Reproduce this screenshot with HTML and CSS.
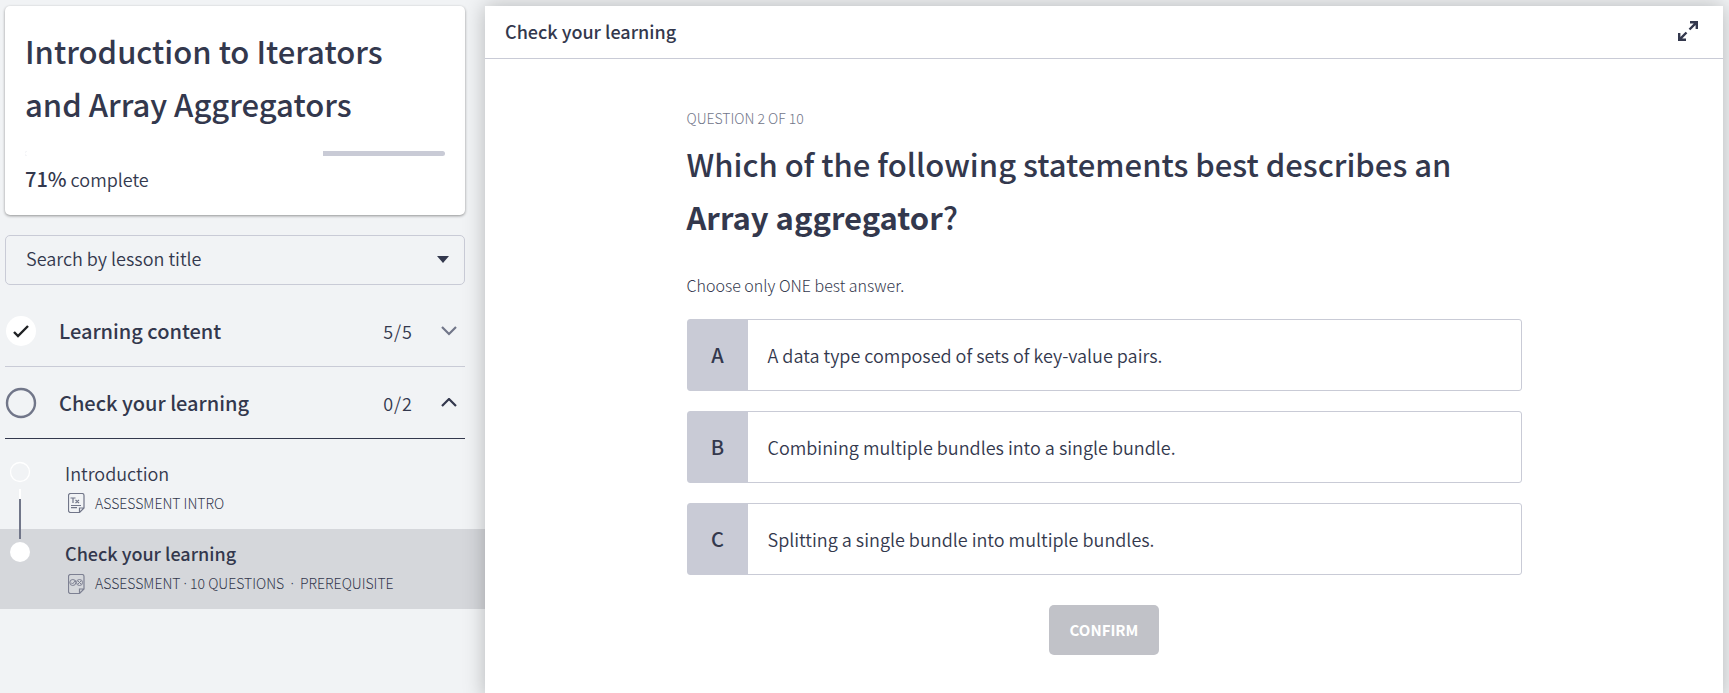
FILE: index.html
```html
<!DOCTYPE html>
<html lang="en">
<head>
<meta charset="utf-8">
<meta name="viewport" content="width=device-width, initial-scale=1">
<title>Introduction to Iterators and Array Aggregators</title>
<link rel="stylesheet" href="styles.css">
</head>
<body>
<div class="layout">
  <aside class="sidebar">
    <section class="course-card">
      <h1 class="course-title">Introduction to Iterators and Array Aggregators</h1>
      <div class="progress" role="progressbar" aria-label="Course progress" aria-valuenow="71" aria-valuemin="0" aria-valuemax="100">
        <div class="progress-fill" style="width: 71%"></div>
      </div>
      <p class="progress-text"><strong>71%</strong> complete</p>
    </section>

    <div class="search">
      <select class="search-select" aria-label="Search by lesson title">
        <option>Search by lesson title</option>
      </select>
      <svg class="search-arrow" width="12" height="7" viewBox="0 0 12 7" aria-hidden="true"><path d="M0 0h12L6 7z" fill="#33384d"/></svg>
    </div>

    <nav class="sections" aria-label="Lessons">
      <button type="button" class="section" aria-expanded="false">
        <svg class="status" width="32" height="32" viewBox="0 0 32 32" aria-hidden="true"><circle cx="16" cy="16" r="15" fill="#fff"/><path d="M9 17l4 4 10-10" fill="none" stroke="#1f2124" stroke-width="2.400"/></svg>
        <span class="section-name">Learning content</span>
        <span class="section-count">5/5</span>
        <svg class="chevron" width="16" height="10" viewBox="0 0 16 10" aria-hidden="true"><path d="M1 1l7 7 7-7" fill="none" stroke="#717689" stroke-width="2.200"/></svg>
      </button>
      <button type="button" class="section section-open" aria-expanded="true">
        <svg class="status" width="32" height="32" viewBox="0 0 32 32" aria-hidden="true"><circle cx="16" cy="16" r="14" fill="none" stroke="#717689" stroke-width="2.400"/></svg>
        <span class="section-name">Check your learning</span>
        <span class="section-count">0/2</span>
        <svg class="chevron" width="16" height="10" viewBox="0 0 16 10" aria-hidden="true"><path d="M1 8l7-7 7 7" fill="none" stroke="#33384d" stroke-width="2.200"/></svg>
      </button>
    </nav>

    <div class="lessons">
      <a class="lesson" href="#introduction">
        <svg class="marker" width="22" height="80" viewBox="0 0 22 80" aria-hidden="true"><circle cx="11" cy="23" r="9.500" fill="none" stroke="#fff" stroke-width="1.300"/><path d="M11 40v10" stroke="#fff" stroke-width="2"/><path d="M11 50v30" stroke="#717689" stroke-width="2"/></svg>
        <span class="lesson-body">
          <span class="lesson-name">Introduction</span>
          <span class="lesson-meta">
            <svg width="17" height="20" viewBox="0 0 17 20" fill="none" stroke="#717689" stroke-width="1.200" aria-hidden="true"><path d="M11.500 19.500H2.500a2 2 0 0 1-2-2v-15a2 2 0 0 1 2-2h11.500a2 2 0 0 1 2 2V15L11.500 19.500V15h4.500"/><path d="M3 12.500h10M3 14.700h6M2.500 5h5M5 5v5M7.500 7l3.500 3M11 7l-3.500 3"/></svg>
            <span>ASSESSMENT INTRO</span>
          </span>
        </span>
      </a>
      <a class="lesson lesson-current" href="#check" aria-current="page">
        <svg class="marker" width="22" height="80" viewBox="0 0 22 80" aria-hidden="true"><path d="M11 0v10" stroke="#717689" stroke-width="2"/><circle cx="11" cy="23" r="10" fill="#fff"/></svg>
        <span class="lesson-body">
          <span class="lesson-name">Check your learning</span>
          <span class="lesson-meta">
            <svg width="17" height="20" viewBox="0 0 17 20" fill="none" stroke="#7d8092" aria-hidden="true"><path stroke-width="1.200" d="M11.500 19.500H2.500a2 2 0 0 1-2-2v-15a2 2 0 0 1 2-2h11.500a2 2 0 0 1 2 2V15L11.500 19.500V15h4.500"/><circle cx="4.800" cy="8.500" r="3"/><circle cx="11.500" cy="8.500" r="3"/><path d="M3 8.500l1.500 1.500L7.500 6.500M10 7l3 3M13 7l-3 3"/></svg>
            <span>ASSESSMENT <span class="dot">·</span> 10 QUESTIONS &nbsp;<span class="dot">·</span>&nbsp; PREREQUISITE</span>
          </span>
        </span>
      </a>
    </div>
  </aside>

  <main class="panel">
    <header class="panel-header">
      <h2 class="panel-title">Check your learning</h2>
      <button type="button" class="expand" aria-label="Full screen">
        <svg width="20" height="20" viewBox="0 0 20 20" fill="none" stroke="#33384d" stroke-width="2.400" aria-hidden="true"><path d="M12 1.200h6.800V8M18.800 1.200l-7.300 7.300M1.200 12v6.800H8M1.200 18.800l7.300-7.300"/></svg>
      </button>
    </header>
    <form class="question">
      <p class="question-count">QUESTION 2 OF 10</p>
      <h3 class="question-title">Which of the following statements best describes an <strong>Array aggregator</strong>?</h3>
      <p class="hint">Choose only ONE best answer.</p>
      <div class="options">
        <button type="button" class="option"><span class="option-key">A</span><span class="option-text">A data type composed of sets of key-value pairs.</span></button>
        <button type="button" class="option"><span class="option-key">B</span><span class="option-text">Combining multiple bundles into a single bundle.</span></button>
        <button type="button" class="option"><span class="option-key">C</span><span class="option-text">Splitting a single bundle into multiple bundles.</span></button>
      </div>
      <button type="submit" class="confirm" disabled>CONFIRM</button>
    </form>
  </main>
</div>
</body>
</html>
```
FILE: styles.css
```css
* {
  box-sizing: border-box;
}

body {
  margin: 0;
  background: #f1f3f5;
  color: #33384d;
  font-family: "Noto Sans CJK SC", "Noto Sans", sans-serif;
  font-size: 18px;
  font-weight: 350;
  line-height: 30px;
}

h1, h2, h3, p {
  margin: 0;
}

button, select {
  font: inherit;
  color: inherit;
}

.layout {
  display: grid;
  grid-template-columns: 485px 1fr;
  min-height: 100vh;
  padding: 6px 6px 0 0;
  overflow: hidden;
}

.course-card {
  margin: 0 20px 20px 5px;
  padding: 18px 20px 21px;
  background: #fff;
  border-radius: 5px;
  box-shadow: 0 1px 3px rgba(0, 0, 0, 0.4);
}

.course-title {
  font-size: 31px;
  font-weight: 500;
  line-height: 53px;
}

.progress {
  height: 5px;
  margin: 21px 0 8px;
  border-radius: 3px;
  background: #c9cbd6;
  overflow: hidden;
}

.progress-fill {
  height: 100%;
  background: #fff;
}

.progress-text strong {
  font-size: 20px;
  font-weight: 500;
}

.search {
  display: grid;
  align-items: center;
  margin: 0 20px 10px 5px;
}

.search-select,
.search-arrow {
  grid-area: 1 / 1;
}

.search-select {
  appearance: none;
  height: 50px;
  padding: 0 20px 4px;
  border: 1px solid #c9cbd6;
  border-radius: 5px;
  background: transparent;
}

.search-arrow {
  justify-self: end;
  margin: 0 16px 2px 0;
  pointer-events: none;
}

.sections {
  margin: 0 20px 0 5px;
}

.section {
  display: flex;
  align-items: center;
  width: 100%;
  height: 72px;
  padding: 0 8px 0 0;
  border: 0;
  border-bottom: 1px solid #c9cbd6;
  background: none;
  text-align: left;
}

.section-open {
  border-bottom-color: #33384d;
}

.section-name {
  flex: 1;
  margin-left: 22px;
  font-size: 20px;
  font-weight: 500;
}

.section-count {
  margin-right: 28px;
  letter-spacing: 1px;
}

.lessons {
  padding-top: 10px;
}

.lesson {
  display: flex;
  height: 80px;
  padding-left: 9px;
  color: inherit;
  text-decoration: none;
}

.lesson-current {
  background: #d5d7db;
}

.lesson-body {
  display: flex;
  flex-direction: column;
  padding: 9px 0 0 34px;
}

.lesson-current .lesson-name {
  font-weight: 500;
}

.lesson-meta {
  display: flex;
  align-items: center;
  gap: 10px;
  padding-left: 3px;
  font-size: 14px;
  font-weight: 300;
}

.dot {
  font-family: "Noto Sans", sans-serif;
}

.panel {
  background: #fff;
  box-shadow: 0 0 20px rgba(0, 0, 0, 0.25);
}

.panel-header {
  display: flex;
  align-items: center;
  justify-content: space-between;
  height: 53px;
  padding: 0 25px 3px 20px;
  border-bottom: 1px solid #c9cbd6;
}

.panel-title {
  font-size: 18px;
  font-weight: 500;
}

.expand {
  display: flex;
  padding: 0;
  border: 0;
  background: none;
}

.question {
  display: flex;
  flex-direction: column;
  max-width: 835px;
  margin: 0 auto;
  padding: 44px 0;
}

.question-count {
  margin-bottom: 4px;
  color: #717689;
  font-size: 14px;
  font-weight: 300;
}

.question-title {
  font-size: 31px;
  font-weight: 500;
  line-height: 53px;
}

.question-title strong {
  font-weight: 700;
}

.hint {
  margin: 27px 0 19px;
  font-size: 16px;
  font-weight: 300;
}

.options {
  display: grid;
  gap: 20px;
}

.option {
  display: flex;
  height: 72px;
  padding: 0;
  border: 1px solid #c9cbd6;
  border-radius: 3px;
  background: #fff;
  text-align: left;
}

.option-key {
  display: grid;
  place-items: center;
  width: 60px;
  background: #c9cbd6;
  font-size: 20px;
  font-weight: 500;
}

.option-text {
  align-self: center;
  padding: 0 20px;
}

.confirm {
  align-self: center;
  height: 50px;
  margin-top: 30px;
  padding: 0 21px;
  border: 0;
  border-radius: 5px;
  background: #c1c2c8;
  color: #fff;
  font-size: 15px;
  font-weight: 700;
}
```
